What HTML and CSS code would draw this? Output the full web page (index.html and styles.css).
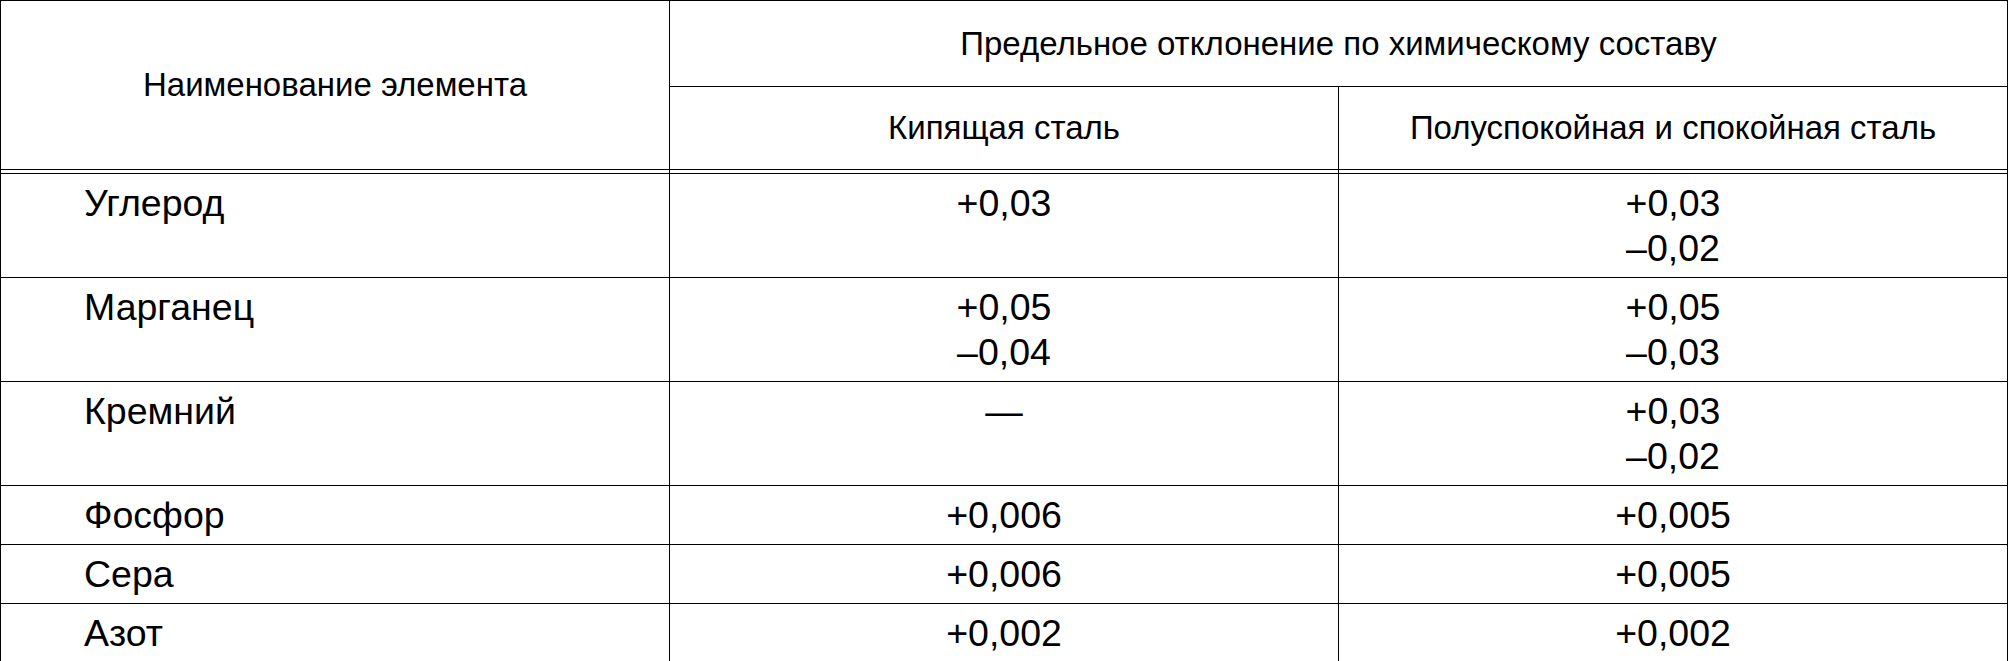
FILE: index.html
```html
<!DOCTYPE html>
<html lang="ru">
<head>
<meta charset="utf-8">
<title>Предельное отклонение по химическому составу</title>
<link rel="stylesheet" href="styles.css">
</head>
<body>
<table class="spec">
  <colgroup>
    <col class="col">
    <col class="col">
    <col class="col">
  </colgroup>
  <thead>
    <tr>
      <th rowspan="2" class="name-head">Наименование элемента</th>
      <th colspan="2" class="group-head">Предельное отклонение по химическому составу</th>
    </tr>
    <tr>
      <th class="sub-head">Кипящая сталь</th>
      <th class="sub-head">Полуспокойная и спокойная сталь</th>
    </tr>
  </thead>
  <tbody>
    <tr class="first-row">
      <td class="el">Углерод</td>
      <td class="val">+0,03</td>
      <td class="val">+0,03<br>–0,02</td>
    </tr>
    <tr>
      <td class="el">Марганец</td>
      <td class="val">+0,05<br>–0,04</td>
      <td class="val">+0,05<br>–0,03</td>
    </tr>
    <tr>
      <td class="el">Кремний</td>
      <td class="val">—</td>
      <td class="val">+0,03<br>–0,02</td>
    </tr>
    <tr>
      <td class="el">Фосфор</td>
      <td class="val">+0,006</td>
      <td class="val">+0,005</td>
    </tr>
    <tr>
      <td class="el">Сера</td>
      <td class="val">+0,006</td>
      <td class="val">+0,005</td>
    </tr>
    <tr>
      <td class="el">Азот</td>
      <td class="val">+0,002</td>
      <td class="val">+0,002</td>
    </tr>
  </tbody>
</table>
</body>
</html>
```

FILE: styles.css
```css
html, body {
  margin: 0;
  padding: 0;
  background: #fff;
}

.spec {
  width: 2008px;
  table-layout: fixed;
  border-collapse: separate;
  border-spacing: 0;
  border-left: 1px solid #000;
  border-top: 1px solid #000;
  font-family: "Liberation Sans", Arial, sans-serif;
  color: #000;
}

.col {
  width: 33.333%;
}

.spec th,
.spec td {
  border-right: 1px solid #000;
  border-bottom: 1px solid #000;
  padding: 0;
  font-weight: normal;
}

.spec th {
  font-size: 33px;
  text-align: center;
  vertical-align: middle;
}

.group-head {
  line-height: 85px;
}

.sub-head {
  line-height: 82px;
}

.name-head {
  line-height: 40px;
  padding-top: 11px;
}

.spec td {
  font-size: 37.5px;
  line-height: 45px;
  padding: 7px 0 6px;
  vertical-align: top;
}

.spec .el {
  text-align: left;
  padding-left: 83px;
}

.spec .val {
  text-align: center;
}

.first-row td {
  padding-top: 11px;
  background: linear-gradient(#000, #000) 0 3px / 100% 1px no-repeat;
}
```
